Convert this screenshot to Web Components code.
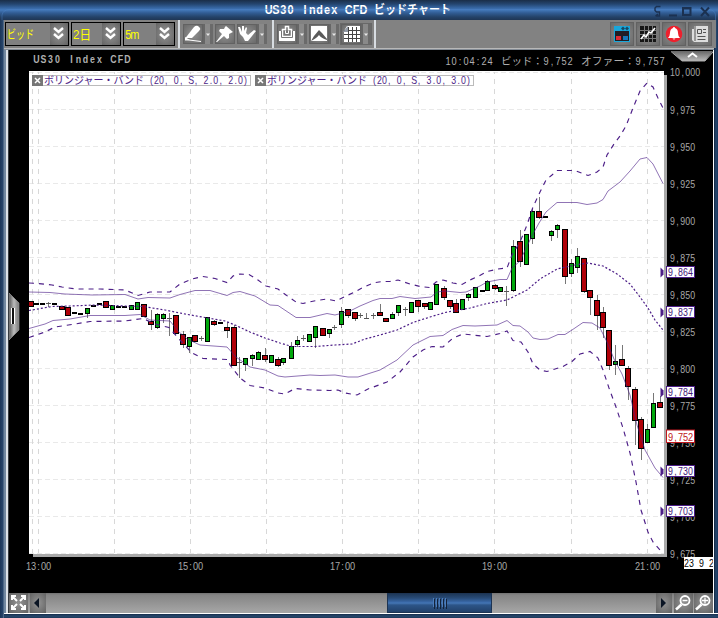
<!DOCTYPE html>
<html lang="ja">
<head>
<meta charset="utf-8">
<title>US30 Index CFD ビッドチャート</title>
<style>
  html, body { margin: 0; background: #1c3a60; }
  body { width: 718px; height: 618px; overflow: hidden; font: 11px "Liberation Sans", "Noto Sans CJK JP", sans-serif; }
</style>
</head>
<body>
<chart-window>
  <fit-text slot="title" w="102" h="20" size="13" base="14" weight="700" fill="#fff">US30 Index CFD</fit-text>
  <fit-text slot="title" w="77" h="20" size="12" base="14" weight="700" fill="#fff">ビッドチャート</fit-text>
  <tool-bar slot="tools">
    <tool-select style="width:64px"><fit-text w="27" h="22" size="12" base="16" fill="#ff0">ビッド</fit-text></tool-select>
    <tool-select style="width:50px"><fit-text w="18" h="22" size="13" base="16" fill="#ff0">2日</fit-text></tool-select>
    <tool-select style="width:52px"><fit-text w="13" h="22" size="13" base="16" fill="#ff0">5m</fit-text></tool-select>
    <tool-sep></tool-sep>
    <tool-button icon="pen" menu></tool-button>
    <tool-button icon="pin"></tool-button>
    <tool-button icon="hand" menu></tool-button>
    <tool-sep style="margin-left:3px"></tool-sep>
    <tool-button icon="clip" menu></tool-button>
    <tool-button icon="shape" menu></tool-button>
    <tool-button icon="grid" menu raised></tool-button>
    <tool-sep></tool-sep>
    <tool-button slot="end" icon="panel" big></tool-button>
    <tool-button slot="end" icon="chart" big></tool-button>
    <tool-button slot="end" icon="bell" big></tool-button>
    <tool-button slot="end" icon="news" big></tool-button>
  </tool-bar>
  <price-chart></price-chart>
  <scroll-strip slot="foot"></scroll-strip>
</chart-window>

<script>
(() => {
  const FONT = '"Liberation Sans","Noto Sans CJK JP",sans-serif';
  const SQUEEZE = 0.84;

  // Latin text sits on a fixed-pitch grid, one cell per character; Japanese is fitted as a run
  function label(x, y, w, str, fill, size = 11, weight = 400) {
    const look = `fill="${fill}" font-size="${size}" font-weight="${weight}" xml:space="preserve"`;
    if (/^[\x20-\x7e]+$/.test(str)) {
      const pitch = w / str.length;
      const xs = [...str].map((_, i) => ((i + 0.5) * pitch / SQUEEZE).toFixed(2)).join(' ');
      return `<text transform="translate(${x} ${y}) scale(${SQUEEZE} 1)" x="${xs}" text-anchor="middle" ${look}>${str}</text>`;
    }
    return `<text x="${x}" y="${y}" textLength="${w}" lengthAdjust="spacingAndGlyphs" ${look}>${str}</text>`;
  }

  function define(name, render) {
    customElements.define(name, class extends HTMLElement {
      constructor() {
        super();
        this.attachShadow({ mode: 'open' });
      }
      connectedCallback() {
        this.shadowRoot.innerHTML = render(this);
      }
    });
  }

  // single line squeezed to a fixed pixel width
  define('fit-text', el => {
    const a = n => el.getAttribute(n);
    return `<style>:host{display:block;flex:none;width:${a('w')}px;height:${a('h')}px}
      svg{display:block;overflow:visible;font-family:${FONT}}</style>
      <svg width="${a('w')}" height="${a('h')}">${label(0, a('base'), a('w'), el.textContent, a('fill'), a('size'), a('weight') || 400)}</svg>`;
  });

  define('chart-window', () => `
    <style>
      :host{display:grid;grid-template-rows:20px 28px 2px 543px 20px 5px;width:718px;height:618px;box-sizing:border-box;
        background:linear-gradient(90deg,#1b3557 0,#28466c 3px,#71879f 4px,#71879f 6px,#dde2e7 6px,#dde2e7 8px,#6e7780 8px,#000 9px,#000 713px,#fff 713px,#fff 714px,#10233c 714px,#28496f 716px,#1a365a 718px)}
      header{display:flex;align-items:center;gap:7px;padding-left:265px;position:relative;
        background:linear-gradient(#1a2e48 0,#24456f 4px,#3767a4 8px,#4378b9 10px,#315c93 13px,#244268 17px,#1f3655 20px)}
      header svg{position:absolute;right:0;top:0}
      .tools{margin:0 2px 0 4px;background:#828282}
      .line{margin:0 4px 0 4px;background:linear-gradient(#b8b8b8 50%,#838b95 50%)}
      main{margin:0 5px 0 9px}
      .foot{margin:0 5px 0 9px}
      .bottom{margin-left:4px;background:linear-gradient(#fff 0,#fff 1px,#152c4a 1px,#28486d 3px,#1c3859 5px)}
    </style>
    <header><slot name="title"></slot>
      <svg width="718" height="20" fill="none" stroke="#1b3151" stroke-width="2">
        <path d="M2 20V15Q3 10 9 9.500H709Q715 10 715.500 15V20" stroke="#4d83c6" stroke-opacity=".45" stroke-width="1"/>
        <path d="M660.500 6.500h-4l-1.500 1.500v2.500l1.500 1.500h3v4h-4M658 14l-2.500 2" stroke-width="1.400"/>
        <path d="M669 15.500h8"/><path d="M683 8.500h7.500v6.500h-7.500zM682 8h9.500"/><path d="M701 7.500l8 8.500M709 7.500l-8 8.500"/>
      </svg>
    </header>
    <div class="tools"><slot name="tools"></slot></div>
    <div class="line"></div>
    <main><slot></slot></main>
    <div class="foot"><slot name="foot"></slot></div>
    <div class="bottom"></div>`);

  define('tool-bar', () => `
    <style>
      :host{display:flex;justify-content:space-between;height:28px;align-items:center}
      .start,.end{display:flex;align-items:center;gap:2px}
      .start{padding-left:1px}
      .end{padding-right:4px}
    </style>
    <div class="start"><slot></slot></div><div class="end"><slot name="end"></slot></div>`);

  define('tool-sep', () => `<style>:host{display:block;width:2px;height:28px;background:#d8dde2;margin:0 1px}</style>`);

  define('tool-select', () => `
    <style>
      :host{display:flex;justify-content:space-between;box-sizing:border-box;height:24px;border:1px solid #000;background:#808080;padding-left:1px;overflow:hidden}
      .btn{width:18px;background:radial-gradient(#929292,#636363);flex:none}
      svg{display:block}
    </style>
    <slot></slot>
    <div class="btn"><svg width="18" height="22" fill="none" stroke="#fff" stroke-width="2.400"><path d="M4 5l4.500 4L13 5M4 11l4.500 4L13 11"/></svg></div>`);

  const ICONS = {
    pen: '<path d="M2.500 14L11 3q2-2 4-1l2 2q1 1-1 3l-7 7z" fill="#fff"/><path d="M2 15.500l16 2" stroke="#fff" stroke-width="1.200"/><path d="M2 16.500V13l5 3z" fill="#fff"/>',
    pin: '<path d="M11 2l7 6-2 1-2 1 0 4-2 1-3-3-7 6-1 0 6-8-3-3 1-2 4 0 1-2z" fill="#fff"/>',
    hand: '<path d="M1 3l2 0 2 5 0-6 2 0 0 5 2-4 1 1-1 5 2 2 6-5 2 1-8 10-3 0-2-4-3-3z" fill="#fff"/>',
    clip: '<path d="M2 7h16v10H2z" fill="#fff"/><path d="M5.500 12.500v-7h3v-3h3v3h3v7z" fill="#777" stroke="#fff" stroke-width="1.500"/><path d="M4.500 7v6.500h11V7" fill="none" stroke="#777"/><path d="M8.500 6.500v3h3v-3" fill="none" stroke="#fff"/>',
    shape: '<path d="M2 2h16v15H2z" fill="#fff"/><path d="M2 17l3-5 5-6 3 3 5 6v1q-6-2-8-5-2 3-8 6z" fill="#5a5a5a"/>',
    grid: '<path d="M6 2h13v16H3V7z" fill="#fff"/><path d="M7.500 3v15M11.500 3v15M15.500 3v15M3 6.500h16M3 10.500h16M3 14.500h16" stroke="#444"/><path d="M2 8l5-6v6z" fill="#929aa6"/>',
    panel: '<path d="M4 4h16v16H4z" fill="#19a6da"/><path d="M5 9h14v10H5z" fill="#211d24"/><path d="M6 14h5v4H6z" fill="#dc2b34"/><path d="M13 14h5v4h-5z" fill="#1676b7"/><path d="M11 6.500l2-2v4zM15 6.500l-2-2v4zM15 6.500l2-2v4zM19 6.500l-2-2v4z" fill="#164864"/>',
    chart: '<path d="M4 4h16v16H4z" fill="#161616"/><path d="M8.500 4v16M12.500 4v16M16.500 4v16M4 8.500h16M4 12.500h16M4 16.500h16" stroke="#777"/><path d="M5 17l3-4 2 2 3-5 2 1 4-5" fill="none" stroke="#fff" stroke-width="1.600"/>',
    bell: '<circle cx="12" cy="12" r="8.300" fill="#ee202d"/><path d="M12 5q1 0 1 1 3 1 3 5 0 3 2 5H6q2-2 2-5 0-4 3-5 0-1 1-1zM10.500 16.500h3q-1.500 2-3 0z" fill="#fff"/>',
    news: '<path d="M6 4h14v16H6L4 18V7h2z" fill="#ddd"/><path d="M7 4v15M9.500 7.500h4v4h-4zM15 7.500h3M15 10.500h3M9.500 14.500h8M9.500 17.500h8" fill="none" stroke="#555"/>'
  };

  define('tool-button', el => {
    const big = el.hasAttribute('big');
    const raised = el.hasAttribute('raised');
    const s = big ? 24 : 20;
    const drop = el.hasAttribute('menu') ? '<i><svg width="10" height="20"><path d="M3 9.500h4L5 12z" fill="#e8e8e8"/></svg></i>' : '';
    return `<style>
        :host{display:flex;flex:none;height:${s}px;background:#6c6c6c${raised ? ';outline:1px solid #686868' : ''}}
        .face{width:${s}px;box-sizing:border-box;background:radial-gradient(#929292,#656565);box-shadow:inset 0 0 0 1px #626262}
        i{display:block;width:10px;background:linear-gradient(90deg,#666 0 2px,#898989 2px 7px,#6a6a6a 7px)}
        svg{display:block}
      </style>
      <div class="face"><svg width="${s}" height="${s}">${ICONS[el.getAttribute('icon')]}</svg></div>${drop}`;
  });

  define('scroll-strip', () => `
    <style>
      :host{display:flex;height:20px;background:linear-gradient(#717171 0,#858585 2px,#a5a5a5 19px)}
      .b{background:radial-gradient(#939393,#626262);flex:none}
      .b.z{margin-right:1px}
      .track{flex:1;display:flex}
      .thumb{margin-left:341px;width:105px;background:linear-gradient(#1b3351 0,#284b77 5px,#3968a7 9px,#4577b6 10px,#2d5588 12px,#22416a 19px);box-shadow:inset 0 0 0 1px #1d3453}
      svg{display:block}
    </style>
    <div class="b" style="width:19px;margin-right:2px"><svg width="19" height="20" fill="none" stroke="#fff" stroke-width="2">
      <path d="M3 7V3h4M12 3h4v4M16 12v4h-4M7 16H3v-4M3 3l5 5M16 3l-5 5M16 16l-5-5M3 16l5-5"/></svg></div>
    <div class="b" style="width:16px"><svg width="16" height="20"><path d="M9 5v10L4 10z" fill="#0b1524"/></svg></div>
    <div class="track"><div class="thumb"><svg width="105" height="20" stroke="#13233b"><path d="M47.500 6v10M50.500 6v10M53.500 6v10M56.500 6v10M59.500 6v10"/><path d="M46.500 5v9M49.500 5v9M52.500 5v9M55.500 5v9M58.500 5v9" stroke="#4c7dbb"/></svg></div></div>
    <div class="b" style="width:16px;margin-right:2px"><svg width="16" height="20"><path d="M5 5v10l5-5z" fill="#0b1524"/></svg></div>
    <div class="b z" style="width:19px"><svg width="19" height="20" fill="none" stroke="#fff"><circle cx="11" cy="7.500" r="4.500" stroke-width="1.800"/><path d="M8.500 7.500h5" stroke-width="1.500"/><path d="M7.500 11.500l-5.500 5" stroke-width="2.500"/></svg></div>
    <div class="b" style="width:19px"><svg width="19" height="20" fill="none" stroke="#fff"><circle cx="11" cy="7.500" r="4.500" stroke-width="1.800"/><path d="M8 7.500h6M11 4.500v6" stroke-width="1.300"/><path d="M7.500 11.500l-5.500 5" stroke-width="2.500"/></svg></div>`);

  // Bollinger bands, screen coordinates
  const BANDS = {
    upper3: '29,283 38,283.500 52,285 62,287 76,289 100,289 125,290 138,295.500 150,292 170,292 180,284 192,279 203,276.500 215,278.500 227,282.500 233,276 240,274 249,274.500 258,280 266,286 278,289 286,295 296,302 303,303.500 314,301 327,299 336,301 346,296 355,292 362,288 373,283 382,281.500 390,281.500 398,280 410,284 420,286.500 430,287.500 436,282 443,280 453,283 462,284.500 470,280 479,276 487,271.500 498,269 507,268 512,255 520,242 527,225 533,207 540,192 546,180 552,175 557,170.500 575,170.500 588,175.500 597,172 603,167 607,155 614,144 620,136 626,126 633,108 640,91 647,83 653,87 658,98 663,108',
    upper2: '29,292 50,292.500 65,294 92,295 125,294.500 138,299 148,297.500 170,298 180,294.500 195,290.500 210,290.500 227,295.500 233,292.500 240,291.500 255,296 270,305 278,305.500 296,317.500 310,317.500 327,313.500 335,315 350,311 360,306 373,300.500 380,298.500 392,298.500 400,296.500 415,298.500 431,297 437,292 445,291 460,292.500 466,292 480,286 487,282 500,279.500 507,279.500 512,268 520,261 527,246 533,234 539,223 546,212 557,202.500 577,202.500 587,204.500 597,203 603,199.500 608,191 620,182 630,171 640,159 647,157.500 653,164 663,183.500',
    mid: '29,310.500 52,306.500 70,306 95,305 125,306 143,306.500 165,310 185,314 205,317.500 225,321 235,325 250,332 265,338 280,343 292,346.500 315,346.500 335,345 352,344 365,339 380,335 397,330 413,322.500 430,317 445,312.500 470,308 487,303.500 507,300 518,294.500 527,290 540,279 557,269 575,265 588,263 603,266 617,274 630,284 640,297 648,308 655,320 663,330',
    lower2: '29,328.500 45,324 53,320.500 70,319 90,315.500 125,315.500 140,314.500 150,320 170,321 178,331 187,339 200,345 227,347 236,357 250,367 265,370 278,376 285,377 310,375 320,375.500 335,375 348,377 358,377 380,370 397,360 413,345 430,336.500 443,335.500 452,329.500 463,325.500 475,326 497,325 507,320.500 513,325.500 520,326 528,332 533,338 540,339.500 548,339 558,334.500 565,334.500 572,330 583,322.500 592,323 600,328 607,342 614,359 622,374 630,395 637,425 645,450 655,468 663,477.500',
    lower3: '29,337.500 45,332 55,327 75,324 90,321.500 125,321 143,318.500 155,324 169,327.500 180,340 192,353 203,358.500 228,359.500 230,365 240,378 250,385.500 265,388 278,393 285,394 295,388.500 310,390 330,390.500 338,390 345,393 357,395 368,389 387,382 400,372 413,357 423,350 432,346.500 443,347 453,338 463,334 487,336.500 500,333.500 507,331 513,340.500 521,342 528,352 533,364 540,370 547,371.500 563,366.500 572,361.500 580,354 590,351.500 598,358 603,370 609,388 616,407 623,428 630,453 636,482 641,510 648,532 653,542 660,550'
  };

  // kind (r/g body, f flat, x cross), center x, body top, body bottom, wick top, wick bottom
  const CANDLES = `r 31 302 307|f 36 304|f 42 304|x 48 303.5 0 302 307|f 54 304|r 62 307 310|r 68 308 316|f 74 313|f 80.5 314.5|g 87 309 314 309 318
f 93 306.5|f 99.5 304|r 106 302 308|g 112 306 310|f 118 307|f 124.5 307|g 131.5 306 310|g 137.5 303 310|r 144 305 317|r 151 322 325 310 330
g 157 315 328 313 329|g 163 315 319 313 323|x 169.5 318 0 313 336|r 176 316 334|r 183 335 345 331 348|g 189 338 347 338 353|r 195 336 342|x 201.5 338.5 0 336 341
g 207.5 318 342|r 214 322 325 320 326|f 220.5 323.5|r 227 328 331 322 338|r 234 328 366 325 366|x 239.5 362.5 0 357 378|g 245.5 359 365 359 371|g 252.5 356 359 354 366
g 258.5 353 360 351 360|r 265 356 360 348 362|g 271.5 356 363|r 278 360 366 357 367|g 283.5 359 363 358 365|g 291 347 359 342 359|g 297 341 345 336 347|x 303.5 338 0 335 341
g 309.5 335 342 334 342|g 315.5 327 338 327 348|r 323 329 336|g 329 330 334 330 338|x 334.5 327.5 0 325 330|g 341.5 312 325 307 328|r 348 310 316 310 318|r 355 313 319 313 321|x 360.5 315.5 0 313 318
x 366.5 318 0 313 318|x 373.5 315.5 0 313 319|r 380 313 316 304 316|r 386 319 322|g 392.5 315 319 312 319|g 398.5 306 313 306 316|x 405.5 309.5 0 307 316|g 411.5 303 313
r 418 301 307 301 312|r 424.5 304 307 303 309|g 430.5 303 310|g 436.5 285 305|r 444 289 298 286 300|r 450 301 307 301 309|r 456 304 313 299 313|g 462.5 300 310 299 310|g 468.5 295 298 293 301
g 475.5 288 298|f 482 291|g 487.5 282 291 280 291|r 495 286 289 284 290|g 500.5 288 292 287 292|x 506.5 291.5 0 286 306|g 513 247 291 240 292|r 520 242 262 230 267|g 526.5 235 265|g 532.5 212 239 209 244
r 539 212 218 197 219|f 545.5 217.5|g 551.5 232 236 230 241|g 557.5 226 230 224 238|r 565 230 277 230 284|g 571 264 274 259 277|g 577.5 257 268 248 273|r 584 259 292 259 293|r 590 291 298 291 315
r 597 301 316 295 330|r 603 313 328 307 338|r 609 331 366 331 370|g 615.5 362 365 345 375|r 622 360 366 345 366|r 628 369 387 366 400|r 635 390 421 387 445|r 641 420 449 417 460
g 647.5 430 443 424 443|g 653.5 404 428 393 428|r 660 403 408 396 408`;

  function candle(spec) {
    const [kind, ...n] = spec.split(' ');
    const [x, top, bottom, hi, lo] = n.map(Number);
    const c = Math.floor(x) + 0.5;
    let s = '';
    if (hi) s += `<path d="M${c} ${hi}V${lo}" stroke="#777"/>`;
    if (kind === 'f') return s + `<rect x="${c - 2.5}" y="${Math.floor(top) - 1}" width="5" height="2"/>`;
    if (kind === 'x') return s + `<path d="M${c - 2.5} ${Math.floor(top) + 0.5}h5" stroke="#555"/>`;
    const w = kind === 'r' ? 5 : 4;
    const left = Math.round(x - (w + 1) / 2) + 0.5;
    return s + `<rect x="${left}" y="${top - 0.5}" width="${w}" height="${bottom - top}" fill="${kind === 'r' ? '#b00008' : '#00a80c'}" stroke="#000"/>`;
  }

  function axis() {
    let s = '';
    for (let i = 0; i < 14; i++) {
      const v = 10000 - i * 25;
      const t = v.toLocaleString('en-US');
      s += label(670, 75.5 + i * 37 + (i ? 1 : 0), t.length * 5.05, t, '#a8a8a8', 10.5);
    }
    [[38, '13:00'], [190, '15:00'], [342, '17:00'], [494, '19:00'], [647, '21:00']].forEach(([x, t]) => {
      s += label(x - 12, 570, 25, t, '#a8a8a8');
    });
    return s;
  }

  function tag(y, str) {
    return `<path d="M660.500 ${y - 4}v10l3-3v-4z" fill="#4c1e87"/>
      <rect x="666.500" y="${y - 5}" width="28" height="11" fill="#fff" stroke="#4c1e87"/>` + label(668, y + 4, 25, str, '#431879', 10.5);
  }

  function legend(x, w, n) {
    return `<rect x="${x + .5}" y="75.500" width="${w}" height="10" fill="#fff" stroke="#bbb"/>
      <path d="M${x} 75h11v11h-11z" fill="#777"/><path d="M${x + 3} 78l5 5m0-5l-5 5" stroke="#fff" stroke-width="1.500"/>` +
      label(x + 12, 83.5, 100, 'ボリンジャー・バンド', '#4c1e87', 10.5) +
      label(x + 117, 83.5, 99, `(20, 0, S, ${n}, ${n})`, '#4c1e87', 10.5);
  }

  define('price-chart', () => {
    const rows = [72, 109, 146, 183, 220, 257, 294, 331, 368, 405, 442, 479, 516, 553].map(y => `M29 ${y + .5}H664`).join('');
    const cols = [32, 38, 114, 190, 266, 342, 418, 494, 571, 647].map(x => `M${x + .5} 72V553`).join('');
    return `
    <style>
      :host{display:block;height:543px;background:#000}
      svg{display:block;font-family:${FONT}}
    </style>
    <svg width="704" height="543" viewBox="9 50 704 543">
      <defs>
        <linearGradient id="h"><stop stop-color="#555"/><stop offset=".5" stop-color="#bbb"/><stop offset="1" stop-color="#777"/></linearGradient>
        <linearGradient id="v" x2="0" y2="1"><stop stop-color="#666"/><stop offset="1" stop-color="#bbb"/></linearGradient>
        <clipPath id="plot"><path d="M29 71h635v482H29z"/></clipPath>
      </defs>
      ${label(33, 63, 98, 'US30 Index CFD', '#b0b0b0', 10.5, 700)}
      ${label(445, 64.5, 48, '10:04:24', '#b0b0b0')}
      ${label(501, 64.5, 42, 'ビッド：', '#b0b0b0', 10.5)}
      ${label(543, 64.5, 30, '9,752', '#b0b0b0')}
      ${label(581, 64.5, 54, 'オファー：', '#b0b0b0', 10.5)}
      ${label(635, 64.5, 30, '9,757', '#b0b0b0')}
      <path d="M671 51h42l-8 10h-23z" fill="url(#v)"/><path d="M671 51.500l11 9.500h23l8-9" fill="none" stroke="#aaa"/>
      <path d="M688 57l4.500-3.500L697 57" fill="none" stroke="#fff" stroke-width="2"/>
      <path d="M33 75h634v482H33z" fill="#a9a9a9"/>
      <path d="M29 71h635v483H29z" fill="#fff"/>
      <path d="${rows}" stroke="#e9e9e9" stroke-dasharray="5 3"/>
      <path d="${cols}" stroke="#d8d8d8" stroke-dasharray="5 5" stroke-dashoffset="3"/>
      <g clip-path="url(#plot)">${CANDLES.split(/[|\n]/).map(candle).join('')}
        <g fill="none" stroke="#4c1e87">
          <polyline points="${BANDS.upper2}" stroke-opacity=".62"/>
          <polyline points="${BANDS.lower2}" stroke-opacity=".62"/>
          <polyline points="${BANDS.mid}" stroke-width="1.200" stroke-dasharray="2 2"/>
          <polyline points="${BANDS.upper3}" stroke-width="1.150" stroke-dasharray="5 5"/>
          <polyline points="${BANDS.lower3}" stroke-width="1.150" stroke-dasharray="5 5"/>
        </g>
      </g>
      ${legend(32, 218, '2.0')}${legend(255, 218, '3.0')}
      ${axis()}
      ${tag(271.5, '9,864')}${tag(311.5, '9,837')}${tag(391.5, '9,784')}${tag(470.5, '9,730')}${tag(510.5, '9,703')}
      <rect x="666.500" y="430" width="28" height="12.500" fill="#fff" stroke="#c01820"/>
      ${label(668, 441, 25, '9,752', '#c01820')}
      <path d="M684 557h29v12h-29z" fill="#fff"/>${label(684, 567, 30, '23 9 2', '#000', 10.5)}
      <path d="M9 293l10 10v27L9 340z" fill="url(#h)" stroke="#aaa" stroke-width=".6"/>
      <path d="M11.500 308v16M14.500 308v16" stroke="#fff"/><path d="M12.500 308v16M13.500 308v16" stroke="#111"/>
    </svg>`;
  });
})();
</script>
</body>
</html>
